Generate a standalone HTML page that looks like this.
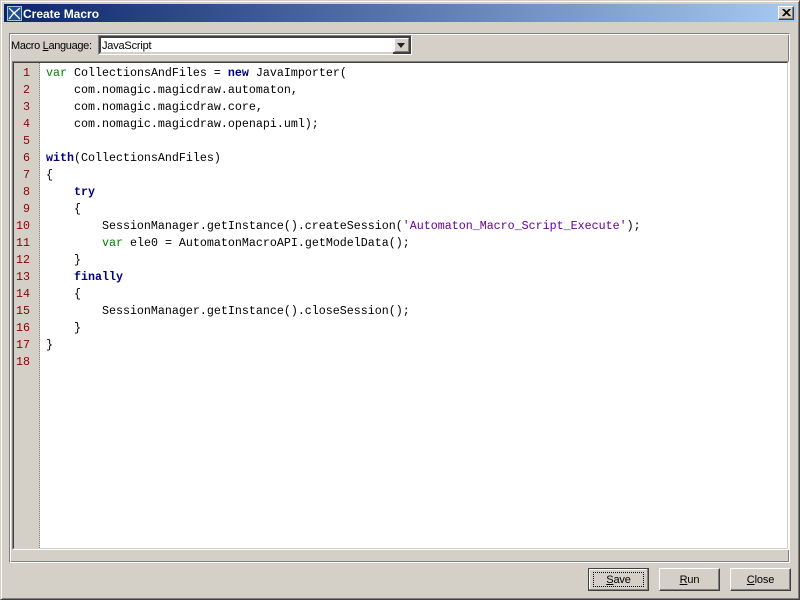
<!DOCTYPE html>
<html><head><meta charset="utf-8"><style>
html,body{margin:0;padding:0}
body{width:800px;height:600px;position:relative;overflow:hidden;background:#d4d0c8;font-family:"Liberation Sans",sans-serif;font-size:11px;color:#000}
.a{position:absolute;box-sizing:border-box}
.ln{position:absolute;left:14px;width:16px;text-align:right;font:11.67px/17px "Liberation Mono",monospace;color:#8b0000}
.c{position:absolute;left:46px;font:11.67px/17px "Liberation Mono",monospace;white-space:pre;color:#000}
.k{color:#000080;font-weight:bold}.v{color:#008000}.s{color:#660099}
.b{position:absolute;top:568px;width:61px;height:23px;box-sizing:border-box;background:#d4d0c8;border:1px solid;border-color:#fff #404040 #404040 #fff;box-shadow:inset -1px -1px 0 #808080;text-align:center;line-height:22px;font-size:11px;letter-spacing:-.15px}
u{text-decoration:underline}
</style></head><body>
<div class="a" style="left:0;top:0;width:800px;height:600px;border:1px solid;border-color:#d4d0c8 #404040 #404040 #d4d0c8;box-shadow:inset 1px 1px 0 #fff,inset -1px -1px 0 #808080"></div>
<div class="a" style="left:4px;top:4px;width:792px;height:18px;background:linear-gradient(90deg,#0a246a,#a6caf0)"></div>
<svg class="a" style="left:7px;top:6px" width="15" height="15" viewBox="0 0 15 15"><rect x=".5" y=".5" width="14" height="14" fill="#1f4f8f" stroke="#a9bfd6"/><path d="M2 2l11 11M13 2L6 8 2 13" stroke="#fff" stroke-width="1.3" fill="none"/></svg>
<div class="a" style="left:23px;top:7px;color:#fff;font-weight:bold;font-size:12px;line-height:15px;white-space:nowrap">Create Macro</div>
<div class="a" style="left:778px;top:6px;width:16px;height:14px;background:#d4d0c8;border:1px solid;border-color:#fff #404040 #404040 #fff;box-shadow:inset -1px -1px 0 #808080"><svg style="position:absolute;left:3px;top:2px" width="9" height="8" viewBox="0 0 9 8"><path d="M0.5 0L7.5 7M1.5 0L8.5 7M7.5 0L0.5 7M8.5 0L1.5 7" stroke="#000" stroke-width="1" fill="none"/></svg></div>

<div class="a" style="left:9px;top:33px;width:781px;height:530px;border:1px solid;border-color:#808080 #fff #fff #808080;box-shadow:inset 1px 1px 0 #fff,inset -1px -1px 0 #808080"></div>

<div class="a" style="left:11px;top:39px;line-height:14px;white-space:nowrap;letter-spacing:-.33px">Macro <u>L</u>anguage:</div>
<div class="a" style="left:98px;top:35px;width:314px;height:20px;border:1px solid;border-color:#808080 #fff #fff #808080"></div>
<div class="a" style="left:99px;top:36px;width:312px;height:18px;background:#fff;border:2px solid;border-color:#404040 #404040 #d4d0c8 #404040"></div>
<div class="a" style="left:102px;top:39px;line-height:14px;white-space:nowrap;letter-spacing:-.2px">JavaScript</div>
<div class="a" style="left:394px;top:38px;width:15px;height:14px;background:#d4d0c8;border:1px solid;border-color:#fff #808080 #808080 #fff"></div>
<div class="a" style="left:393px;top:52px;width:18px;height:2px;background:#404040"></div>
<div class="a" style="left:397px;top:43px;width:0;height:0;border-left:4.5px solid transparent;border-right:4.5px solid transparent;border-top:5px solid #222"></div>

<div class="a" style="left:12px;top:61px;width:777px;height:489px;border:1px solid;border-color:#808080 #fff #fff #808080"></div>
<div class="a" style="left:13px;top:62px;width:775px;height:487px;border:1px solid;border-color:#404040 #d4d0c8 #d4d0c8 #404040;background:#fff"></div>
<div class="a" style="left:14px;top:63px;width:26px;height:485px;background:#d4d0c8;border-right:1px dotted #808080"></div>

<div class="a" style="left:0;top:1px;width:800px;height:400px">
<div class="ln" style="top:64px">1</div><div class="ln" style="top:81px">2</div><div class="ln" style="top:98px">3</div><div class="ln" style="top:115px">4</div><div class="ln" style="top:132px">5</div><div class="ln" style="top:149px">6</div><div class="ln" style="top:166px">7</div><div class="ln" style="top:183px">8</div><div class="ln" style="top:200px">9</div><div class="ln" style="top:217px">10</div><div class="ln" style="top:234px">11</div><div class="ln" style="top:251px">12</div><div class="ln" style="top:268px">13</div><div class="ln" style="top:285px">14</div><div class="ln" style="top:302px">15</div><div class="ln" style="top:319px">16</div><div class="ln" style="top:336px">17</div><div class="ln" style="top:353px">18</div>

<div class="c" style="top:64px"><span class="v">var</span> CollectionsAndFiles = <span class="k">new</span> JavaImporter(</div>
<div class="c" style="top:81px">    com.nomagic.magicdraw.automaton,</div>
<div class="c" style="top:98px">    com.nomagic.magicdraw.core,</div>
<div class="c" style="top:115px">    com.nomagic.magicdraw.openapi.uml);</div>
<div class="c" style="top:149px"><span class="k">with</span>(CollectionsAndFiles)</div>
<div class="c" style="top:166px">{</div>
<div class="c" style="top:183px">    <span class="k">try</span></div>
<div class="c" style="top:200px">    {</div>
<div class="c" style="top:217px">        SessionManager.getInstance().createSession(<span class="s">'Automaton_Macro_Script_Execute'</span>);</div>
<div class="c" style="top:234px">        <span class="v">var</span> ele0 = AutomatonMacroAPI.getModelData();</div>
<div class="c" style="top:251px">    }</div>
<div class="c" style="top:268px">    <span class="k">finally</span></div>
<div class="c" style="top:285px">    {</div>
<div class="c" style="top:302px">        SessionManager.getInstance().closeSession();</div>
<div class="c" style="top:319px">    }</div>
<div class="c" style="top:336px">}</div>
</div>

<div class="b" style="left:588px;border-color:#404040;box-shadow:inset -1px -1px 0 #808080,inset 1px 1px 0 #fff"><div class="a" style="left:4px;top:3px;width:51px;height:15px;border:1px dotted #000"></div><u>S</u>ave</div>
<div class="b" style="left:659px"><u>R</u>un</div>
<div class="b" style="left:730px"><u>C</u>lose</div>
</body></html>
